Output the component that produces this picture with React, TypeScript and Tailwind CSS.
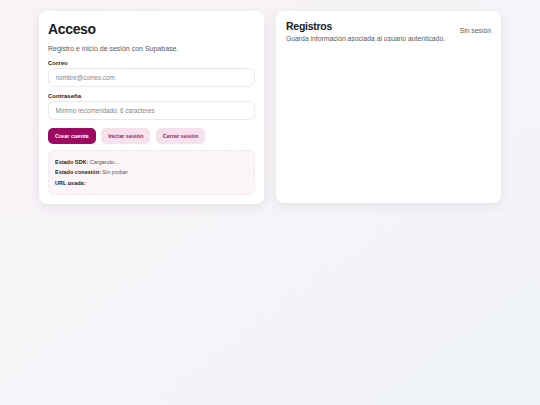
export default function App() {
    return (
        <div className="min-h-screen bg-gradient-to-br from-[#f8f3f6] via-[#f6f4f8] to-[#f0f4f8] font-['Liberation_Sans',Arial,sans-serif] text-[#1f1f1f]">
            <div className="mx-auto grid w-[462px] grid-cols-2 items-start gap-[12px] pt-[11px]">
                <AccessCard />
                <RecordsCard />
            </div>
        </div>
    );
}

const AccessCard: React.FC = () => {
    return (
        <section className="flex flex-col rounded-[8px] bg-white px-[9px] pb-[9px] pt-[9px] shadow-[0_3px_12px_rgba(70,30,60,0.09)]">
            <h1 className="text-[14px] font-bold leading-[18px] tracking-tight text-[#1b1b1b]">Acceso</h1>
            <p className="mt-[6px] text-[7px] leading-[10px] text-[#5a5a5a]">Registro e inicio de sesión con Supabase.</p>

            <label className="mt-[5px] text-[6px] font-bold leading-[8px] text-[#222]">Correo</label>
            <input
                type="email"
                placeholder="nombre@correo.com"
                className="mt-[1px] h-[19px] w-full rounded-[6px] border border-[#ece7eb] bg-white px-[6.5px] text-[6.3px] outline-none placeholder:text-[#858585]"
            />

            <label className="mt-[5px] text-[6px] font-bold leading-[8px] text-[#222]">Contraseña</label>
            <input
                type="password"
                placeholder="Mínimo recomendado: 6 caracteres"
                className="mt-[1px] h-[19px] w-full rounded-[6px] border border-[#ece7eb] bg-white px-[6.5px] text-[6.3px] outline-none placeholder:text-[#858585]"
            />

            <div className="mt-[8px] flex gap-[5.5px]">
                <button className="h-[16px] rounded-[5px] bg-[#9e0a61] px-[7px] text-[5.5px] font-bold text-white">Crear cuenta</button>
                <button className="h-[16px] rounded-[5px] bg-[#f6e1ed] px-[7px] text-[5.5px] font-bold text-[#9b1764]">Iniciar sesión</button>
                <button className="h-[16px] rounded-[5px] bg-[#f6e1ed] px-[7px] text-[5.5px] font-bold text-[#9b1764]">Cerrar sesión</button>
            </div>

            <div className="mt-[6px] rounded-[6px] border border-dashed border-[#f0e4eb] bg-[#fbf5f8] px-[6px] py-[5.5px] text-[5.5px] leading-[10.5px] text-[#555]">
                <div><span className="font-bold text-[#222]">Estado SDK:</span> Cargando...</div>
                <div><span className="font-bold text-[#222]">Estado conexión:</span> Sin probar</div>
                <div><span className="font-bold text-[#222]">URL usada:</span></div>
            </div>
        </section>
    );
}

const RecordsCard: React.FC = () => {
    return (
        <section className="h-[192px] rounded-[8px] bg-white px-[10px] pt-[9px] shadow-[0_3px_12px_rgba(70,30,60,0.09)]">
            <div className="flex items-center justify-between">
                <div>
                    <h2 className="text-[10.5px] font-bold leading-[13px] tracking-tight text-[#1b1b1b]">Registros</h2>
                    <p className="mt-[1px] text-[6.8px] leading-[9px] text-[#5a5a5a]">Guarda información asociada al usuario autenticado.</p>
                </div>
                <span className="text-[6.8px] text-[#5a5a5a]">Sin sesión</span>
            </div>
        </section>
    );
}
